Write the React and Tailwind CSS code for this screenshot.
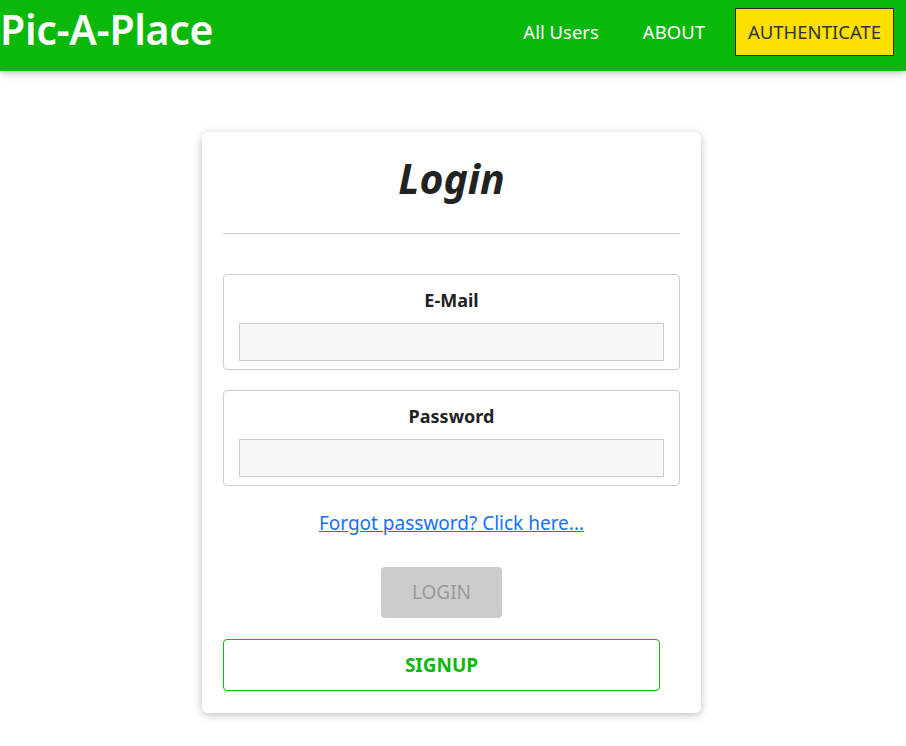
import React from "react";

const font = { fontFamily: '"Noto Sans", "Open Sans", sans-serif' };

function Field({ label, type }) {
  return (
    <div className="border border-[#ccc] rounded-[4px] px-[15px] pt-[12px] pb-[8px] flex flex-col items-center">
      <label className="text-[18px] font-bold text-[#222] leading-[26px] mb-[10px]">{label}</label>
      <input
        type={type}
        className="w-full h-[38px] bg-[#f7f7f7] border border-[#ccc] outline-none px-2"
      />
    </div>
  );
}

export default function App() {
  return (
    <div className="min-h-[746px] bg-white" style={font}>
      <header className="h-[71px] bg-[#0ab80a] flex items-center justify-between shadow-[0_2px_8px_rgba(0,0,0,0.26)]">
        <h1 className="text-[41px] font-semibold text-white leading-none -mt-[12px] tracking-[-0.3px]">
          Pic-A-Place
        </h1>
        <nav className="flex items-center pr-[12px] -mt-[8px]">
          <a className="text-[18.5px] text-white mr-[44px]">All Users</a>
          <a className="text-[18.5px] text-white mr-[30px]">ABOUT</a>
          <button className="h-[48px] px-[12px] bg-[#fbe000] border border-[#292929] text-[#333] text-[18.5px]">
            AUTHENTICATE
          </button>
        </nav>
      </header>

      <main className="flex justify-center pt-[61px]">
        <div className="w-[499px] -ml-[3px] bg-white rounded-[6px] shadow-[0_2px_8px_rgba(0,0,0,0.26)] px-[21px] pt-[18px] pb-[22px]">
          <h2 className="text-center text-[41px] font-bold italic text-[#222] leading-[56px]">Login</h2>
          <hr className="border-0 border-t border-[#ccc] mt-[27px] mb-[40px]" />
          <div className="flex flex-col gap-[20px]">
            <Field label="E-Mail" type="email" />
            <Field label="Password" type="password" />
          </div>
          <div className="text-center mt-[22px]">
            <a href="#" className="text-[19px] text-[#1a6ef5] underline leading-[30px]">
              Forgot password? Click here...
            </a>
          </div>
          <div className="w-[437px] flex flex-col items-center">
            <button
              disabled
              className="mt-[29px] w-[121px] h-[51px] bg-[#ccc] text-[#999] text-[19px] rounded-[4px]"
            >
              LOGIN
            </button>
            <button className="mt-[21px] w-full h-[52px] border border-[#0ab80a] text-[#0ab80a] font-bold text-[19px] rounded-[4px] bg-white">
              SIGNUP
            </button>
          </div>
        </div>
      </main>
    </div>
  );
}
